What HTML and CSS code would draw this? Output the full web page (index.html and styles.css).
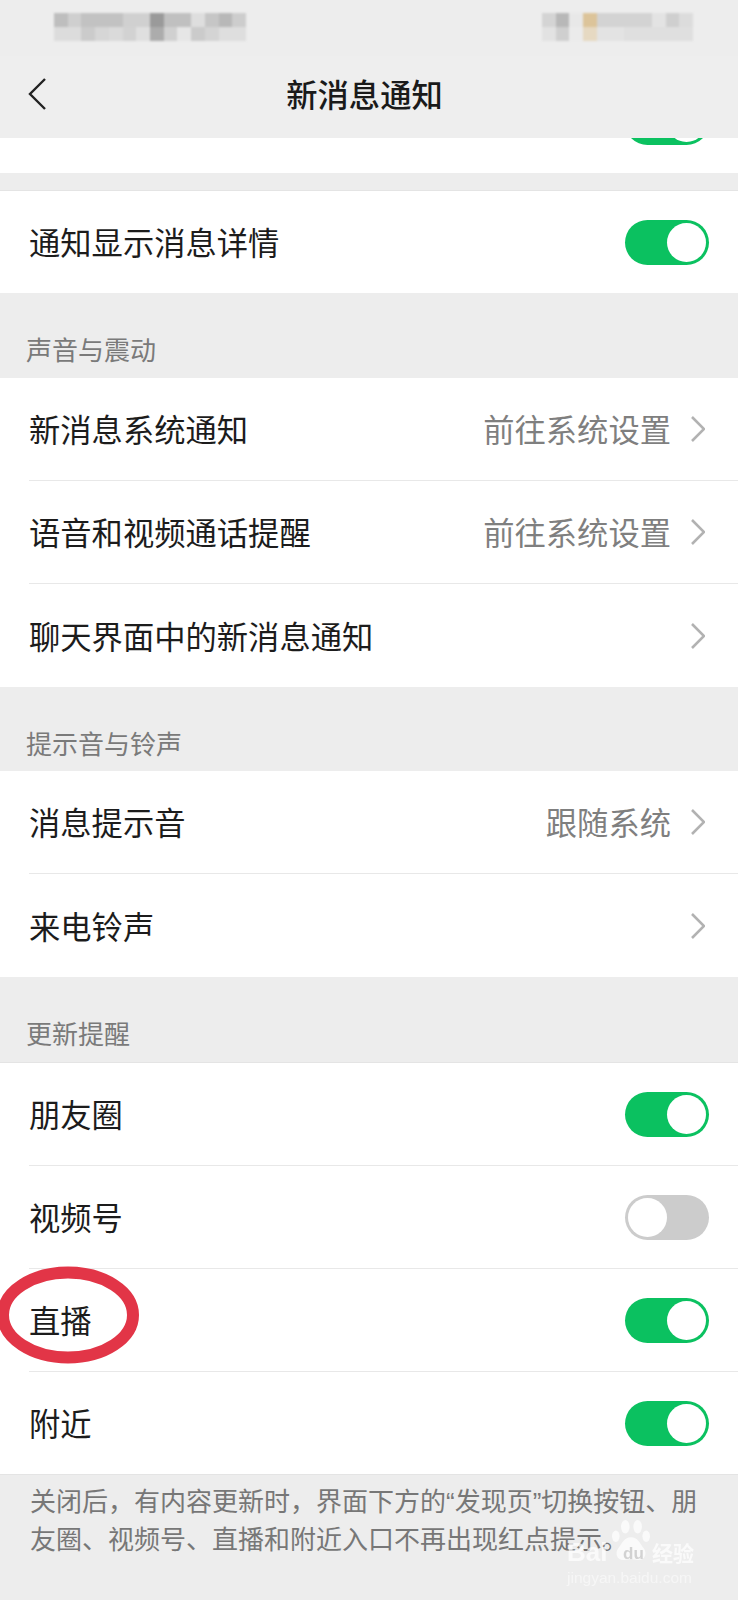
FILE: index.html
```html
<!DOCTYPE html>
<html lang="zh-CN">
<head>
    <meta charset="UTF-8">
    <meta name="viewport" content="width=device-width, initial-scale=1.0">
    <title>新消息通知</title>
    <link rel="stylesheet" href="styles.css">
</head>
<body>
    <div class="page">
        <div class="status-bar">
            <svg class="blur-block" width="192" height="28" viewBox="0 0 14 2" shape-rendering="crispEdges">
                <rect x="0" y="0" width="1" height="1" fill="#bebebe"/><rect x="1" y="0" width="1" height="1" fill="#cfcfcf"/>
                <rect x="2" y="0" width="3" height="1" fill="#c2c2c2"/><rect x="5" y="0" width="2" height="1" fill="#d0d0d0"/>
                <rect x="7" y="0" width="1" height="1" fill="#9a9a9a"/><rect x="8" y="0" width="2" height="1" fill="#c0c0c0"/>
                <rect x="10" y="0" width="1" height="1" fill="#dedede"/><rect x="11" y="0" width="1" height="1" fill="#c6c6c6"/>
                <rect x="12" y="0" width="1" height="1" fill="#b8b8b8"/><rect x="13" y="0" width="1" height="1" fill="#cdcdcd"/>
                <rect x="0" y="1" width="2" height="1" fill="#dcdcdc"/><rect x="2" y="1" width="1" height="1" fill="#cbcbcb"/>
                <rect x="3" y="1" width="1" height="1" fill="#d6d6d6"/><rect x="4" y="1" width="1" height="1" fill="#dadada"/>
                <rect x="5" y="1" width="1" height="1" fill="#d2d2d2"/><rect x="6" y="1" width="1" height="1" fill="#dfdfdf"/>
                <rect x="7" y="1" width="1" height="1" fill="#acacac"/><rect x="8" y="1" width="1" height="1" fill="#d0d0d0"/>
                <rect x="9" y="1" width="1" height="1" fill="#e6e6e6"/><rect x="10" y="1" width="1" height="1" fill="#cbcbcb"/>
                <rect x="11" y="1" width="1" height="1" fill="#d4d4d4"/><rect x="12" y="1" width="2" height="1" fill="#dedede"/>
            </svg>
            <svg class="blur-block" width="151" height="28" viewBox="0 0 11 2" shape-rendering="crispEdges">
                <rect x="0" y="0" width="1" height="1" fill="#d4d4d4"/><rect x="1" y="0" width="1" height="1" fill="#b8b8b8"/>
                <rect x="2" y="0" width="1" height="1" fill="#e8e8e8"/><rect x="3" y="0" width="1" height="1" fill="#dcc49a"/>
                <rect x="4" y="0" width="4" height="1" fill="#d3d3d3"/><rect x="8" y="0" width="1" height="1" fill="#e3e3e3"/>
                <rect x="9" y="0" width="1" height="1" fill="#cfcfcf"/><rect x="10" y="0" width="1" height="1" fill="#dcdcdc"/>
                <rect x="0" y="1" width="1" height="1" fill="#e2e2e2"/><rect x="1" y="1" width="1" height="1" fill="#cfcfcf"/>
                <rect x="2" y="1" width="1" height="1" fill="#ebebeb"/><rect x="3" y="1" width="1" height="1" fill="#e6d9c2"/>
                <rect x="4" y="1" width="2" height="1" fill="#e3e3e3"/><rect x="6" y="1" width="5" height="1" fill="#dfdfdf"/>
            </svg>
        </div>

        <div class="nav-bar">
            <svg class="back" width="18" height="32" viewBox="0 0 18 32"><path d="M17 1 2 16l15 15" fill="none" stroke="#222" stroke-width="2.4"/></svg>
            <div class="nav-title">新消息通知</div>
        </div>

        <div class="group group-cut">
            <div class="row row-cut"><span class="toggle on toggle-cut"></span></div>
        </div>
        <div class="spacer"></div>
        <div class="group group-line">
            <div class="row"><span class="label">通知显示消息详情</span><span class="toggle on"></span></div>
        </div>

        <div class="section-title">声音与震动</div>
        <div class="group">
            <div class="row">
                <span class="label">新消息系统通知</span>
                <span class="value">前往系统设置</span>
                <svg class="chevron" width="15" height="26" viewBox="0 0 15 26"><path d="M2 1 14 13 2 25" fill="none" stroke="#b2b2b2" stroke-width="2.6"/></svg>
            </div>
            <div class="row">
                <span class="label">语音和视频通话提醒</span>
                <span class="value">前往系统设置</span>
                <svg class="chevron" width="15" height="26" viewBox="0 0 15 26"><path d="M2 1 14 13 2 25" fill="none" stroke="#b2b2b2" stroke-width="2.6"/></svg>
            </div>
            <div class="row">
                <span class="label">聊天界面中的新消息通知</span>
                <svg class="chevron" width="15" height="26" viewBox="0 0 15 26"><path d="M2 1 14 13 2 25" fill="none" stroke="#b2b2b2" stroke-width="2.6"/></svg>
            </div>
        </div>

        <div class="section-title section-short">提示音与铃声</div>
        <div class="group">
            <div class="row">
                <span class="label">消息提示音</span>
                <span class="value">跟随系统</span>
                <svg class="chevron" width="15" height="26" viewBox="0 0 15 26"><path d="M2 1 14 13 2 25" fill="none" stroke="#b2b2b2" stroke-width="2.6"/></svg>
            </div>
            <div class="row">
                <span class="label">来电铃声</span>
                <svg class="chevron" width="15" height="26" viewBox="0 0 15 26"><path d="M2 1 14 13 2 25" fill="none" stroke="#b2b2b2" stroke-width="2.6"/></svg>
            </div>
        </div>

        <div class="section-title">更新提醒</div>
        <div class="group group-line">
            <div class="row"><span class="label">朋友圈</span><span class="toggle on"></span></div>
            <div class="row"><span class="label">视频号</span><span class="toggle off"></span></div>
            <div class="row"><span class="label">直播</span><span class="toggle on"></span></div>
            <div class="row"><span class="label">附近</span><span class="toggle on"></span></div>
        </div>

        <p class="footer-note">关闭后，有内容更新时，界面下方的“发现页”切换按钮、朋友圈、视频号、直播和附近入口不再出现红点提示。</p>

        <!-- red mark drawn over the screenshot -->
        <svg class="red-mark" width="150" height="106" viewBox="0 0 150 106">
            <ellipse cx="74" cy="53" rx="65" ry="42.5" fill="none" stroke="#e23547" stroke-width="12"/>
        </svg>

        <div class="watermark">
            <div class="wm-logo">
                <span class="wm-bai">Bai</span>
                <svg class="wm-paw" width="38" height="42" viewBox="0 0 40 44" fill="#fff">
                    <ellipse cx="4" cy="17" rx="4" ry="6"/>
                    <ellipse cx="14" cy="7" rx="4.5" ry="7"/>
                    <ellipse cx="27" cy="7" rx="4.5" ry="7"/>
                    <ellipse cx="36" cy="17" rx="4" ry="6"/>
                    <path d="M20 18c7 0 9 6 13 11 5 6 1 14-6 13-3 0-5-1-7-1s-4 1-7 1c-7 1-11-7-6-13 4-5 6-11 13-11z"/>
                </svg>
                <span class="wm-du">du</span>
                <span class="wm-cn">经验</span>
            </div>
            <div class="wm-url">jingyan.baidu.com</div>
        </div>
    </div>
</body>
</html>
```

FILE: styles.css
```css
body { margin: 0; background: #ededed; font-family: "Noto Sans CJK SC", "Noto Sans", sans-serif; color: #1c1c1c; }
.page { position: relative; width: 738px; height: 1600px; overflow: hidden; background: #ededed; }

.status-bar { height: 56px; padding: 13px 45px 0 54px; box-sizing: border-box; display: flex; justify-content: space-between; align-items: flex-start; }
.blur-block { display: block; filter: blur(1px); }

.nav-bar { height: 82px; padding-left: 28px; display: flex; align-items: center; position: relative; background: #eeeeee; }
.back { position: relative; top: -3px; }
.nav-title { position: absolute; left: 0; right: 9px; top: 15px; text-align: center; font-size: 31.3px; line-height: 46px; font-weight: 500; color: #1a1a1a; }

.group { background: #fff; }
.group-line { border-top: 1px solid #e4e4e4; }
.group-cut { height: 35px; overflow: hidden; }
.spacer { height: 17px; }

.row { height: 102px; margin-left: 29px; padding-right: 29px; display: flex; align-items: center; border-bottom: 1px solid #e8e8e8; }
.group .row:last-child { border-bottom: none; height: 103px; }
.group-line .row:last-child { height: 102px; }
.group-cut .row-cut { height: 35px; align-items: flex-start; justify-content: flex-end; }

.label { flex: 1; font-size: 31.3px; line-height: 44px; }
.value { font-size: 31.3px; line-height: 44px; color: #7f7f7f; margin-right: 19px; }
.chevron { display: block; margin-right: 4px; }

.toggle { display: block; width: 84px; height: 45px; border-radius: 23px; position: relative; }
.toggle::after { content: ""; position: absolute; top: 3px; width: 39px; height: 39px; border-radius: 50%; background: #fff; }
.toggle.on { background: #0bc160; }
.toggle.on::after { right: 3px; }
.toggle.off { background: #cccccc; }
.toggle.off::after { left: 3px; }
.toggle-cut { margin-top: -38px; }

.section-title { height: 85px; padding: 37px 0 0 26px; box-sizing: border-box; font-size: 26px; line-height: 38px; color: #7a7a7a; }
.section-short { height: 84px; }

.footer-note { margin: 0; padding: 9px 30px 0 30px; border-top: 1px solid #e4e4e4; font-family: "Liberation Sans", "Noto Sans CJK SC", sans-serif; font-size: 26px; line-height: 37.6px; color: #777; }

.red-mark { position: absolute; left: -6px; top: 1262px; }

.watermark { position: absolute; left: 567px; top: 1520px; width: 135px; color: #fff; opacity: 0.72; }
.wm-logo { position: relative; height: 46px; }
.wm-bai { position: absolute; left: 0; top: 17px; font-family: "Liberation Sans", sans-serif; font-weight: 700; font-size: 26px; line-height: 30px; }
.wm-paw { position: absolute; left: 45px; top: 0; }
.wm-du { position: absolute; left: 56px; top: 24px; font-family: "Liberation Sans", sans-serif; font-weight: 700; font-size: 17px; line-height: 20px; color: #c9c9c9; }
.wm-cn { position: absolute; left: 85px; top: 17px; font-size: 21px; line-height: 30px; font-weight: 700; }
.wm-url { margin-top: 2px; font-family: "Liberation Sans", sans-serif; font-size: 15.5px; line-height: 20px; white-space: nowrap; opacity: 0.7; }
```
